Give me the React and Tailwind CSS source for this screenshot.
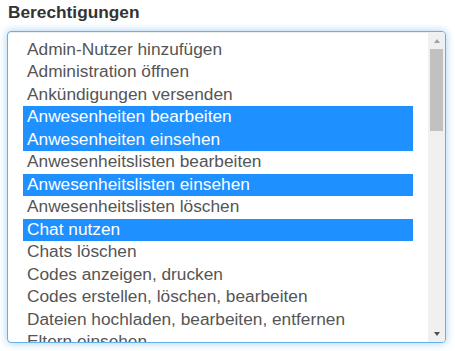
import React from "react";

const items = [
  ["Admin-Nutzer hinzufügen", false],
  ["Administration öffnen", false],
  ["Ankündigungen versenden", false],
  ["Anwesenheiten bearbeiten", true],
  ["Anwesenheiten einsehen", true],
  ["Anwesenheitslisten bearbeiten", false],
  ["Anwesenheitslisten einsehen", true],
  ["Anwesenheitslisten löschen", false],
  ["Chat nutzen", true],
  ["Chats löschen", false],
  ["Codes anzeigen, drucken", false],
  ["Codes erstellen, löschen, bearbeiten", false],
  ["Dateien hochladen, bearbeiten, entfernen", false],
  ["Eltern einsehen", false],
];

export default function App() {
  return (
    <div className="w-[455px] h-[351px] bg-white overflow-hidden" style={{ fontFamily: '"Liberation Sans", Arial, sans-serif' }}>
      <div className="pl-[8px] text-[17.3px] leading-[24px] font-bold text-[#333333]">Berechtigungen</div>
      <div className="mt-[7px] ml-[7px] w-[439px] h-[312px] flex border border-[#66afe9] rounded-[4px] bg-white overflow-hidden shadow-[inset_0_1px_1px_rgba(0,0,0,0.075),0_0_8px_rgba(102,175,233,0.6)]">
        <div className="flex-1 overflow-hidden px-[15px] pt-[6.5px]">
          {items.map(([t, sel]) => (
            <div
              key={t}
              className={
                "h-[22.5px] leading-[20.5px] px-[4px] text-[17.3px] whitespace-nowrap " +
                (sel ? "bg-[#1e90ff] text-white" : "text-[#555555]")
              }
            >
              {t}
            </div>
          ))}
        </div>
        <div className="w-[17px] bg-[#f0f0f0] flex flex-col items-center">
          <div className="h-[17px] flex items-center justify-center">
            <div className="w-0 h-0 border-l-[3.5px] border-r-[3.5px] border-b-[4px] border-l-transparent border-r-transparent border-b-[#a3a3a3]" />
          </div>
          <div className="w-[13px] h-[82px] bg-[#c1c1c1]" />
          <div className="flex-1" />
          <div className="h-[17px] flex items-center justify-center">
            <div className="w-0 h-0 border-l-[3.5px] border-r-[3.5px] border-t-[4px] border-l-transparent border-r-transparent border-t-[#505050]" />
          </div>
        </div>
      </div>
    </div>
  );
}
